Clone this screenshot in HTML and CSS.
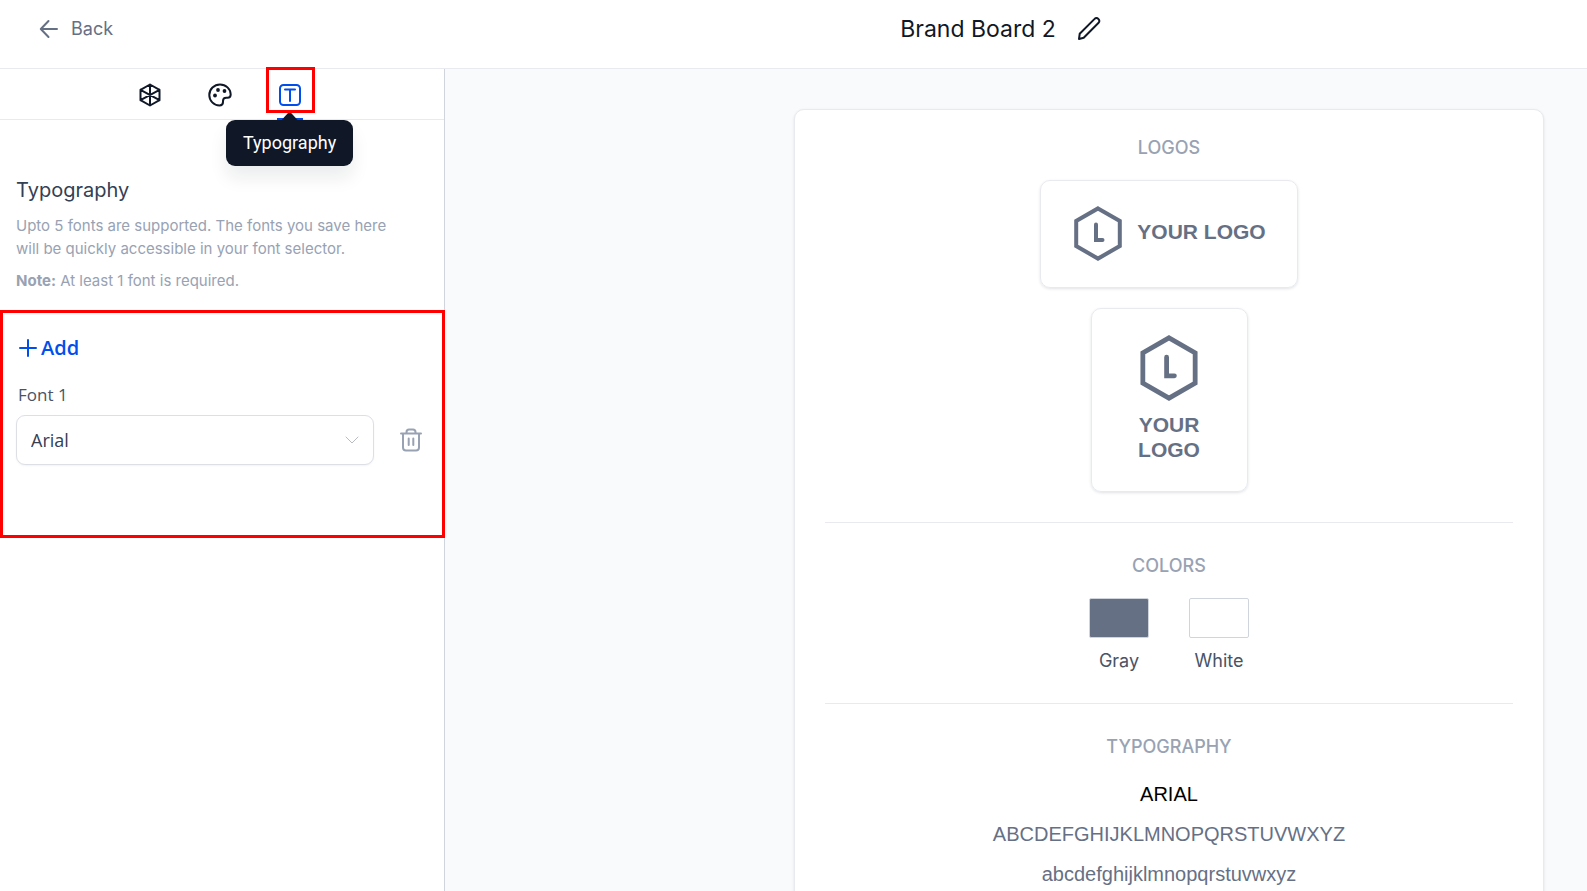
FILE: index.html
```html
<!DOCTYPE html>
<html lang="en">
<head>
    <meta charset="UTF-8">
    <meta name="viewport" content="width=device-width, initial-scale=1.0">
    <title>Brand Board 2</title>
    <link rel="stylesheet" href="styles.css">
</head>
<body>
    <header class="topbar">
        <a href="#" class="back-link">
            <svg class="icon-back" viewBox="0 0 20 20" aria-hidden="true"><path d="M18 10H2M9.500 2 1.800 10l7.700 8"/></svg>
            Back
        </a>
        <div class="board-title">
            <h1>Brand Board 2</h1>
            <button type="button" class="icon-button" aria-label="Rename board">
                <svg class="icon" viewBox="0 0 24 24" aria-hidden="true"><path d="M2 22l.7-5.200L17.600 1.900a2.500 2.500 0 0 1 3.700 0l.3.300a2.500 2.500 0 0 1 0 3.600L6.700 20.800z"/></svg>
            </button>
        </div>
    </header>

    <div class="layout">
        <aside class="sidebar">
            <nav class="tabs">
                <button type="button" class="tab" aria-label="Logos">
                    <svg class="icon" viewBox="0 0 24 24" aria-hidden="true"><path d="M12 1.500 21.500 6.800v10.400L12 22.500 2.500 17.200V6.800zM12 1.500v21M2.500 6.800l19 10.400M21.500 6.800l-19 10.400"/></svg>
                </button>
                <button type="button" class="tab" aria-label="Colors">
                    <svg class="icon" viewBox="0 0 24 24" aria-hidden="true">
                        <path d="M12 1.500C6.200 1.500 1.300 6.200 1.300 12S5.800 22.500 11.500 22.500c2.300 0 3.500-1.500 3.500-3.400v-1c0-2 1.200-3.300 3.300-3.300h1.200c2 0 3.200-1.200 3.200-3.200C22.700 5.800 17.800 1.500 12 1.500z"/>
                        <circle class="dot" cx="7" cy="12.500" r="1.900"/>
                        <circle class="dot" cx="10" cy="7" r="1.900"/>
                        <circle class="dot" cx="16.500" cy="8" r="1.900"/>
                    </svg>
                </button>
                <button type="button" class="tab active highlight" aria-label="Typography" aria-describedby="tab-tip">
                    <svg class="icon" viewBox="0 0 24 24" aria-hidden="true"><rect x="2" y="2" width="20" height="20" rx="3.500"/><path d="M7 6.500h10M12 6.500v11.500"/></svg>
                </button>
                <span class="tooltip" id="tab-tip" role="tooltip">Typography</span>
            </nav>

            <section class="intro">
                <h2>Typography</h2>
                <p>Upto 5 fonts are supported. The fonts you save here will be quickly accessible in your font selector.</p>
                <p><strong>Note:</strong> At least 1 font is required.</p>
            </section>

            <section class="fonts">
                <button type="button" class="add-button">
                    <svg class="icon-plus" viewBox="0 0 18 18" aria-hidden="true"><path d="M9 1v16M1 9h16"/></svg>
                    Add
                </button>
                <label for="font1">Font 1</label>
                <div class="font-row">
                    <div class="select-box">
                        <select id="font1">
                            <option>Arial</option>
                            <option>Inter</option>
                            <option>Roboto</option>
                        </select>
                        <svg class="chevron" viewBox="0 0 14 8" aria-hidden="true"><path d="M1 1l6 6 6-6"/></svg>
                    </div>
                    <button type="button" class="icon-button delete" aria-label="Delete font">
                        <svg class="icon" viewBox="0 0 24 24" aria-hidden="true"><path d="M2 5.500h20M7.500 5.500V4.200C7.500 2.500 8.500 1.500 10 1.500h4c1.500 0 2.500 1 2.500 2.700v1.300M4 5.500v14c0 2 1 3 3 3h10c2 0 3-1 3-3v-14M9.700 10.500v6.500M14.300 10.500v6.500"/></svg>
                    </button>
                </div>
            </section>
        </aside>

        <main class="canvas">
            <div class="board">
                <section class="board-section">
                    <h3>LOGOS</h3>
                    <div class="logo-card">
                        <svg class="logo-mark" viewBox="0 0 48 55" aria-hidden="true"><path d="M24 2.400 45.800 14.900v25.200L24 52.600 2.200 40.100V14.900z"/><path d="M22 18.500v15.500h6.500"/></svg>
                        <span>YOUR LOGO</span>
                    </div>
                    <div class="logo-card stacked">
                        <svg class="logo-mark" viewBox="0 0 48 55" aria-hidden="true"><path d="M24 2.400 45.800 14.900v25.200L24 52.600 2.200 40.100V14.900z"/><path d="M22 18.500v15.500h6.500"/></svg>
                        <span>YOUR<br>LOGO</span>
                    </div>
                </section>

                <section class="board-section">
                    <h3>COLORS</h3>
                    <div class="swatches">
                        <div class="swatch"><div class="chip gray"></div>Gray</div>
                        <div class="swatch"><div class="chip white"></div>White</div>
                    </div>
                </section>

                <section class="board-section">
                    <h3>TYPOGRAPHY</h3>
                    <div class="specimen">
                        <p class="font-name">ARIAL</p>
                        <p>ABCDEFGHIJKLMNOPQRSTUVWXYZ</p>
                        <p>abcdefghijklmnopqrstuvwxyz</p>
                    </div>
                </section>
            </div>
        </main>
    </div>
</body>
</html>
```
FILE: styles.css
```css
*,
*::before,
*::after {
    box-sizing: border-box;
}

body {
    display: flex;
    flex-direction: column;
    height: 100vh;
    margin: 0;
    overflow: hidden;
    font-family: Inter, "Liberation Sans", sans-serif;
    background-color: #fff;
    color: #101828;
}

h1, h2, h3, p {
    margin: 0;
    font-weight: 400;
}

button {
    padding: 0;
    border: none;
    background: none;
    color: inherit;
    font: inherit;
    cursor: pointer;
}

svg {
    display: block;
    flex: none;
    fill: none;
    stroke: currentColor;
    stroke-width: 2;
    stroke-linecap: round;
    stroke-linejoin: round;
}

.icon {
    width: 24px;
    height: 24px;
}

/* Top bar */
.topbar {
    display: grid;
    grid-template-columns: 445px 1fr;
    align-items: center;
    flex: none;
    height: 69px;
    padding-bottom: 11px;
    border-bottom: 1px solid #e8eaef;
}

.back-link {
    display: flex;
    align-items: center;
    gap: 12px;
    padding-left: 39px;
    color: #667085;
    font-size: 18px;
    text-decoration: none;
}

.icon-back {
    width: 20px;
    height: 20px;
}

.board-title {
    display: flex;
    align-items: center;
    justify-content: center;
    gap: 21px;
    padding-right: 31px;
}

.board-title h1 {
    font-size: 23px;
}

/* Sidebar */
.layout {
    display: flex;
    flex: 1;
    min-height: 0;
}

.sidebar {
    flex: none;
    width: 445px;
    border-right: 1px solid #d0d5dd;
}

.tabs {
    position: relative;
    display: flex;
    justify-content: center;
    gap: 22px;
    height: 51px;
    padding: 1px 4px 0 0;
    border-bottom: 1px solid #e8eaef;
}

.tab {
    display: grid;
    place-items: center;
    position: relative;
    width: 48px;
}

.tab.active {
    color: #004eeb;
}

.tab.active::after {
    content: "";
    position: absolute;
    right: 11px;
    bottom: -1px;
    left: 11px;
    height: 2px;
    background-color: #004eeb;
}

.highlight::before {
    content: "";
    position: absolute;
    top: -3px;
    left: 0;
    width: 49px;
    height: 46px;
    border: 3px solid #f00;
}

.dot {
    fill: currentColor;
    stroke: none;
}

.tooltip {
    position: absolute;
    top: 51px;
    left: 226px;
    padding: 12px 17px;
    border-radius: 9px;
    background-color: #101828;
    box-shadow: 0 12px 18px rgba(16, 24, 40, 0.08);
    color: #fff;
    font-family: Roboto, sans-serif;
    font-size: 18px;
    line-height: 22px;
}

.tooltip::before {
    content: "";
    position: absolute;
    bottom: 100%;
    left: 50%;
    width: 16px;
    height: 7px;
    margin-left: -8px;
    background-color: #101828;
    clip-path: polygon(0 100%, 40% 0, 60% 0, 100% 100%);
}

.intro {
    padding: 55px 40px 18px 16px;
    color: #98a2b3;
    font-size: 15px;
    line-height: 23px;
}

.intro h2 {
    margin-bottom: 9px;
    color: #344054;
    font-size: 20px;
    line-height: 30px;
}

.intro p + p {
    margin-top: 9px;
}

.fonts {
    height: 228px;
    margin-right: -1px;
    padding: 19px 17px 0 13px;
    border: 3px solid #f00;
    font-family: "Open Sans", "Noto Sans", sans-serif;
}

.add-button {
    display: flex;
    align-items: center;
    gap: 4px;
    padding-left: 3px;
    color: #004eeb;
    font-size: 20px;
    font-weight: 600;
    line-height: 32px;
}

.icon-plus {
    width: 18px;
    height: 18px;
}

.fonts label {
    display: block;
    margin: 19px 2px 8px;
    color: #475467;
    font-size: 17px;
    font-weight: 500;
    line-height: 24px;
}

.font-row {
    display: flex;
    align-items: center;
    justify-content: space-between;
}

.select-box {
    position: relative;
    width: 358px;
}

.select-box select {
    width: 100%;
    height: 50px;
    padding: 0 40px 0 14px;
    border: 1px solid #dcdfe6;
    border-radius: 9px;
    background-color: #fff;
    box-shadow: 0 1px 2px rgba(16, 24, 40, 0.05);
    color: #344054;
    font-family: inherit;
    font-size: 18px;
    appearance: none;
}

.chevron {
    position: absolute;
    top: 21px;
    right: 15px;
    width: 14px;
    height: 8px;
    color: #b8bcc4;
    stroke-width: 1;
    pointer-events: none;
}

.delete {
    margin-right: 2px;
    color: #98a2b3;
}

/* Board preview */
.canvas {
    flex: 1;
    padding: 40px 43px 0;
    overflow: hidden;
    background-color: #f9fafb;
}

.board {
    max-width: 750px;
    min-height: 100%;
    margin-left: auto;
    padding: 0 30px;
    border: 1px solid #e8eaef;
    border-radius: 10px;
    background-color: #fff;
    box-shadow: 0 1px 3px rgba(16, 24, 40, 0.1);
}

.board-section {
    display: flex;
    flex-direction: column;
    align-items: center;
    padding: 27px 0 30px;
    text-align: center;
}

.board-section + .board-section {
    padding-top: 32px;
    border-top: 1px solid #e8eaef;
}

.board-section h3 {
    margin-bottom: 21px;
    color: #98a2b3;
    font-size: 18px;
    font-weight: 500;
    line-height: 22px;
}

.board-section:last-child h3 {
    margin-bottom: 16px;
}

.logo-card {
    display: flex;
    align-items: center;
    gap: 15px;
    height: 108px;
    padding: 0 31px 2px 33px;
    border: 1px solid #e8eaef;
    border-radius: 10px;
    box-shadow: 0 1px 3px rgba(16, 24, 40, 0.12);
    color: #667085;
    font-family: "Liberation Sans", Arial, sans-serif;
    font-size: 21px;
    font-weight: 700;
    line-height: 25px;
}

.logo-card span {
    padding-bottom: 4px;
}

.logo-mark {
    width: 48px;
    height: 55px;
    stroke-width: 4;
    stroke-linejoin: miter;
}

.stacked {
    flex-direction: column;
    gap: 11px;
    width: 157px;
    height: 184px;
    margin-top: 20px;
    padding: 26px 0 0;
}

.stacked .logo-mark {
    width: 58px;
    height: 66px;
}

.swatches {
    display: flex;
    gap: 40px;
}

.swatch {
    color: #475467;
    font-size: 18px;
    line-height: 24px;
}

.chip {
    width: 60px;
    height: 40px;
    margin-bottom: 11px;
    border: 1px solid #d0d5dd;
    border-radius: 2px;
}

.gray {
    background-color: #667085;
}

.white {
    background-color: #fff;
}

.specimen {
    color: #667085;
    font-family: "Liberation Sans", Arial, sans-serif;
    font-size: 20px;
    line-height: 40px;
}

.font-name {
    color: #000;
}
```
